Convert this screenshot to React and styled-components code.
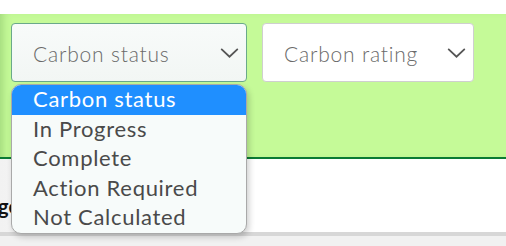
import React from "react";
import styled, { createGlobalStyle } from "styled-components";

const GlobalStyle = createGlobalStyle`
  html, body {
    margin: 0;
    padding: 0;
    background: #ffffff;
    font-family: "Lato", "Open Sans", sans-serif;
    overflow: hidden;
  }
`;

const statusOptions = ["Carbon status", "In Progress", "Complete", "Action Required", "Not Calculated"];

export default function App() {
  return (
    <Page>
      <GlobalStyle />
      <TopStrip />
      <FilterBar>
        <SelectWrap>
          <Select width={236} focused>
            <SelectLabel>Carbon status</SelectLabel>
            <Chevron />
          </Select>
          <Menu>
            {statusOptions.map((option, index) => (
              <Option key={option} active={index === 0}>
                {option}
              </Option>
            ))}
          </Menu>
        </SelectWrap>
        <Select width={212}>
          <SelectLabel>Carbon rating</SelectLabel>
          <Chevron />
        </Select>
      </FilterBar>
      <Content>
        <Heading>ge</Heading>
      </Content>
      <Footer />
    </Page>
  );
}

function Chevron() {
  return (
    <ChevronSvg viewBox="0 0 20 12" width="19" height="11">
      <path d="M1.5 1.5 L10 9.5 L18.5 1.5" fill="none" stroke="#555" strokeWidth="2" strokeLinecap="round" />
    </ChevronSvg>
  );
}

const Page = styled.div`
  width: 506px;
  height: 246px;
  display: flex;
  flex-direction: column;
  position: relative;
`;

const TopStrip = styled.div`
  height: 14px;
  background: #ffffff;
`;

const FilterBar = styled.div`
  height: 134px;
  padding: 9px 0 0 11px;
  display: flex;
  align-items: flex-start;
  gap: 15px;
  background: #c5fa98;
  box-shadow: inset 8px 0 10px -6px rgba(80, 140, 60, 0.35);
  border-bottom: 2px solid #0b7a34;
`;

const SelectWrap = styled.div`
  position: relative;
`;

const Select = styled.div`
  box-sizing: border-box;
  width: ${({ width }) => width}px;
  height: 59px;
  padding: 0 7px 0 21px;
  display: flex;
  align-items: center;
  justify-content: space-between;
  border-radius: 4px;
  border: 1px solid ${({ focused }) => (focused ? "#6aa98a" : "#cfcfcf")};
  background: ${({ focused }) => (focused ? "linear-gradient(#f8fbfa, #f2f6f4)" : "#ffffff")};
`;

const SelectLabel = styled.span`
  font-size: 21px;
  font-weight: 300;
  color: #6a6a6a;
  letter-spacing: 0.8px;
  margin-top: 1px;
`;

const ChevronSvg = styled.svg`
  display: block;
  margin-top: 1px;
`;

const Menu = styled.div`
  position: absolute;
  top: 61px;
  left: 0;
  width: 236px;
  box-sizing: border-box;
  background: #f7fbfa;
  border: 1px solid #a9a9a9;
  border-radius: 10px;
  overflow: hidden;
  box-shadow: 2px 3px 6px rgba(0, 0, 0, 0.2);
  z-index: 2;
`;

const Option = styled.div`
  height: 29.6px;
  line-height: 28px;
  padding-left: 21px;
  font-size: 22px;
  letter-spacing: 0.7px;
  color: ${({ active }) => (active ? "#ffffff" : "#4a4a4a")};
  background: ${({ active }) => (active ? "#1f8fff" : "transparent")};
`;

const Content = styled.div`
  flex: 1;
  padding-top: 35px;
  background: linear-gradient(90deg, #f2f2f2 0%, #ffffff 30%);
`;

const Heading = styled.h2`
  margin: 0 0 0 -2px;
  font-size: 20px;
  font-weight: 700;
  color: #111111;
`;

const Footer = styled.div`
  height: 10px;
  border-top: 4px solid #d7d7d7;
  background: #f1f1f1;
`;
